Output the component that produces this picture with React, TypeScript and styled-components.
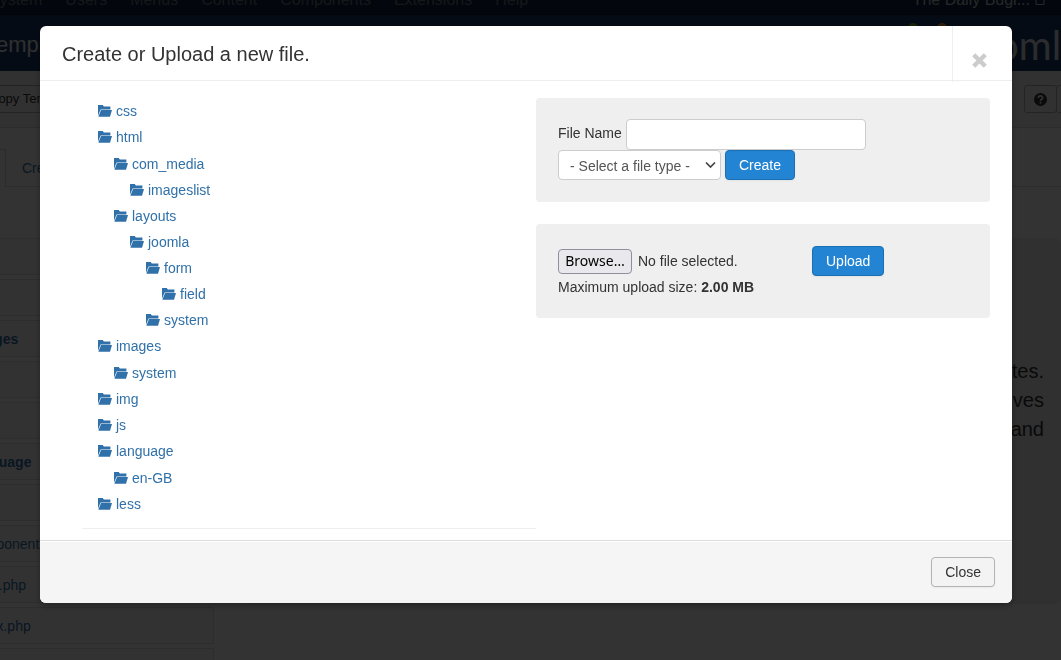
import React from "react";
import styled, { createGlobalStyle } from "styled-components";

const sans = `"Liberation Sans", Arial, Helvetica, sans-serif`;

const GlobalStyle = createGlobalStyle`
  *, *::before, *::after { box-sizing: border-box; }
  body {
    margin: 0;
    overflow: hidden;
    background: #fff;
    color: #333;
    font: 14px/20px ${sans};
  }
  button, input, select { font: inherit; color: inherit; margin: 0; }
  a { color: #3071a9; text-decoration: none; }
  ul { list-style: none; margin: 0; padding: 0; }
`;

/* ---------- page behind the dialog ---------- */

const Viewport = styled.div`
  height: 100vh;
  overflow: hidden;
`;

const Page = styled.div`
  margin-left: -45px;
`;

const NavBar = styled.nav`
  display: flex;
  align-items: flex-end;
  gap: 23px;
  height: 15px;
  padding: 0 16px 5px 34px;
  background: #10223e;
  border-bottom: 1px solid #0b182c;
  font-size: 16px;
  line-height: 18px;
  overflow: hidden;
  white-space: nowrap;
`;

const NavItem = styled.a`
  color: #6d7583;
`;

const SiteLink = styled.a`
  display: flex;
  align-items: center;
  gap: 5px;
  margin-left: auto;
  color: #bfc3c9;
`;

const Header = styled.header`
  display: flex;
  align-items: center;
  height: 56px;
  padding: 4px 0 0 30px;
  background: #1a3867;
  overflow: hidden;
`;

const PageTitle = styled.h1`
  flex: 1;
  margin: 0;
  color: #e8ebf0;
  font-size: 22px;
  font-weight: 400;
  line-height: 30px;
`;

const StatusDots = styled.div`
  display: flex;
  align-self: flex-start;
  gap: 19px;
  padding-top: 4px;
`;

const Dot = styled.span<{ $color: string }>`
  width: 10px;
  height: 10px;
  border-radius: 5px;
  background: ${(p) => p.$color};
`;

const Wordmark = styled.span`
  width: 134px;
  margin: 0 -20px 0 0;
  color: #d5d9e0;
  font: 400 40px/44px Lato, ${sans};
  text-align: right;
`;

const SubHead = styled.div`
  display: flex;
  justify-content: space-between;
  align-items: center;
  height: 57px;
  padding-left: 24px;
  background: #f5f5f5;
  border-bottom: 1px solid #dcdcdc;
`;

const ToolButton = styled.button`
  display: inline-flex;
  align-items: center;
  justify-content: center;
  height: 28px;
  padding: 0 9px;
  border: 1px solid #b3b3b3;
  border-radius: 3px;
  background: #f3f3f3;
  font-size: 13px;
  svg { flex: none; }
`;

const ToolGroup = styled.div`
  display: flex;
  margin-right: -28px;
  ${ToolButton} { width: 33px; }
  ${ToolButton} + ${ToolButton} { margin-left: -1px; }
`;

const Tabs = styled.div`
  display: flex;
  align-items: flex-end;
  height: 59px;
  border-bottom: 1px solid #ddd;
`;

const Tab = styled.a<{ $active?: boolean }>`
  height: 38px;
  padding: 9px 16px;
  margin-bottom: -1px;
  white-space: nowrap;
  ${(p) =>
    p.$active
      ? `width: 50px; padding: 9px 0; color: #555; background: #fff; border: 1px solid #ddd; border-width: 1px 0 1px 1px; border-bottom-color: #fff;`
      : `border: 1px solid #ddd; border-width: 0 0 1px 1px; border-radius: 0 0 0 2px;`}
`;

const Workspace = styled.div`
  display: flex;
  align-items: flex-start;
  gap: 27px;
  padding-top: 51px;
`;

const FileList = styled.ul`
  display: flex;
  flex-direction: column;
  flex: none;
  gap: 4px;
  width: 259px;
`;

const FileItem = styled.li<{ $folder: boolean }>`
  height: 37px;
  padding: 8px 14px;
  border: 1px solid #e0e0e0;
  background: #fafafa;
  font-weight: ${(p) => (p.$folder ? 700 : 400)};
`;

const Hero = styled.section`
  flex: 1;
  height: 366px;
  padding: 119px 17px 0;
  background: #eee;
  border-radius: 6px;
  font-size: 20px;
  line-height: 29px;
  text-align: right;
  p { margin: 0; }
`;

/* ---------- dialog ---------- */

const Backdrop = styled.div`
  position: fixed;
  inset: 0;
  padding: 26px 49px 0 40px;
  background: rgba(0, 0, 0, 0.8);
`;

const Modal = styled.div`
  border-radius: 6px;
  background: #fff;
  box-shadow: 0 3px 7px rgba(0, 0, 0, 0.3);
`;

const ModalHeader = styled.div`
  display: flex;
  justify-content: space-between;
  height: 55px;
  padding-left: 22px;
  border-bottom: 1px solid #eee;
`;

const ModalTitle = styled.h3`
  margin: 0;
  padding-top: 13px;
  font-size: 20px;
  font-weight: 400;
  line-height: 30px;
`;

const CloseIconButton = styled.button`
  width: 60px;
  height: 56px;
  padding: 12px 7px 0 0;
  border: 0;
  border-left: 1px solid #eee;
  background: none;
  color: #ccc;
  svg { display: block; margin: 0 auto; }
`;

const ModalBody = styled.div`
  display: grid;
  grid-template-columns: 1fr 1fr;
  align-items: start;
  padding: 17px 22px 11px 42px;
`;

const TreeColumn = styled.div`
  padding: 0 16px 11px;
  border-bottom: 1px solid #eee;
`;

const TreeList = styled.ul`
  ul { padding-left: 16px; }
  & > li > ul { padding-top: 1px; }
`;

const FolderLink = styled.a`
  display: flex;
  align-items: center;
  gap: 4px;
  line-height: 26px;
`;

const FormColumn = styled.div`
  display: flex;
  flex-direction: column;
  gap: 22px;
`;

const Well = styled.form`
  padding: 21px 22px 22px;
  border-radius: 4px;
  background: #efefef;
`;

const Row = styled.div`
  display: flex;
  align-items: center;
  gap: 4px;
`;

const FieldLabel = styled.label`
  padding-bottom: 4px;
`;

const TextInput = styled.input`
  width: 240px;
  height: 31px;
  padding: 4px 6px;
  border: 1px solid #ccc;
  border-radius: 4px;
  background: #fff;
`;

const SelectWrap = styled.div`
  position: relative;
  width: 163px;
  svg { position: absolute; top: 11px; right: 5px; pointer-events: none; }
`;

const Select = styled.select`
  display: block;
  width: 100%;
  height: 30px;
  padding: 1px 11px 0;
  border: 1px solid #ccc;
  border-radius: 4px;
  background: #fff;
  color: #555;
  appearance: none;
`;

const Button = styled.button<{ $primary?: boolean }>`
  height: 30px;
  padding: 0 13px;
  border: 1px solid ${(p) => (p.$primary ? "#1a6fb5" : "#b3b3b3")};
  border-radius: 4px;
  background: ${(p) => (p.$primary ? "#2384d3" : "#f3f3f3")};
  color: ${(p) => (p.$primary ? "#fff" : "#333")};
  box-shadow: 0 1px 2px rgba(0, 0, 0, 0.05);
`;

const UploadWell = styled(Well)`
  padding: 22px 22px 20px;
`;

const FileField = styled.label`
  position: relative;
  display: flex;
  align-items: center;
  gap: 6px;
  width: 250px;
  input { position: absolute; inset: 0; width: 100%; opacity: 0; }
`;

const Browse = styled.span`
  width: 74px;
  height: 25px;
  border: 1px solid #8f8f9d;
  border-radius: 4px;
  background: #e9e9ed;
  color: #000;
  font: 14px/22px "Noto Sans", sans-serif;
  text-align: center;
`;

const SizeNote = styled.p`
  margin: 0;
  line-height: 22px;
`;

const ModalFooter = styled.div`
  display: flex;
  justify-content: flex-end;
  padding: 16px 17px;
  border-top: 1px solid #ddd;
  border-radius: 0 0 6px 6px;
  background: #f5f5f5;
  box-shadow: inset 0 1px 0 #fff;
`;

/* ---------- icons ---------- */

const FolderIcon = () => (
  <svg width="14" height="12" viewBox="0 0 14 12" fill="currentColor" aria-hidden="true">
    <path d="M0 0h4.8l1 1.4h6.6v3H2.6L.9 8.6 0 11z" />
    <path d="M3 5h11l-2 6.8H.4z" />
  </svg>
);

const CrossIcon = () => (
  <svg width="15" height="15" viewBox="0 0 15 15" stroke="currentColor" strokeWidth="4.4" aria-hidden="true">
    <path d="M1.7 1.7l11.6 11.6M13.3 1.7L1.7 13.3" />
  </svg>
);

const HelpIcon = () => (
  <svg width="13" height="13" viewBox="0 0 13 13" aria-hidden="true">
    <circle cx="6.5" cy="6.5" r="6.5" fill="#333" />
    <path d="M4.3 4.9C4.3 2.2 8.7 2.2 8.7 4.8c0 1.6-2.2 1.4-2.2 3.1" fill="none" stroke="#f3f3f3" strokeWidth="1.7" />
    <path d="M5.6 8.9h1.8v1.7H5.6z" fill="#f3f3f3" />
  </svg>
);

const ChevronIcon = () => (
  <svg width="11" height="8" viewBox="0 0 11 8" fill="none" stroke="#444" strokeWidth="1.7" aria-hidden="true">
    <path d="M1 1.5l4.5 4.6L10 1.5" />
  </svg>
);

const ExternalIcon = () => (
  <svg width="10" height="12" viewBox="0 0 10 12" fill="none" stroke="currentColor" aria-hidden="true">
    <path d="M1 .5h8v10H1z" />
  </svg>
);

/* ---------- data ---------- */

interface Folder {
  name: string;
  children?: Folder[];
}

const folders: Folder[] = [
  { name: "css" },
  {
    name: "html",
    children: [
      { name: "com_media", children: [{ name: "imageslist" }] },
      {
        name: "layouts",
        children: [
          {
            name: "joomla",
            children: [{ name: "form", children: [{ name: "field" }] }, { name: "system" }],
          },
        ],
      },
    ],
  },
  { name: "images", children: [{ name: "system" }] },
  { name: "img" },
  { name: "js" },
  { name: "language", children: [{ name: "en-GB" }] },
  { name: "less" },
];

const menu = ["System", "Users", "Menus", "Content", "Components", "Extensions", "Help"];

const files = [
  "css", "html", "images", "img", "js", "language", "less",
  "component.php", "error.php", "index.php", "offline.php",
];

const FolderItems = ({ items }: { items: Folder[] }) => (
  <>
    {items.map((f) => (
      <li key={f.name}>
        <FolderLink href="#">
          <FolderIcon />
          {f.name}
        </FolderLink>
        {f.children && (
          <ul>
            <FolderItems items={f.children} />
          </ul>
        )}
      </li>
    ))}
  </>
);

export default function App() {
  return (
    <Viewport>
      <GlobalStyle />
      <Page>
        <NavBar>
          {menu.map((m) => (
            <NavItem href="#" key={m}>{m}</NavItem>
          ))}
          <SiteLink href="#">
            The Daily Bugl... <ExternalIcon />
          </SiteLink>
        </NavBar>
        <Header>
          <PageTitle>Templates</PageTitle>
          <StatusDots>
            <Dot $color="#7fae1e" />
            <Dot $color="#e8902a" />
          </StatusDots>
          <Wordmark>Joomla</Wordmark>
        </Header>
        <SubHead>
          <ToolButton type="button">Copy Template</ToolButton>
          <ToolGroup>
            <ToolButton type="button" aria-label="Help"><HelpIcon /></ToolButton>
            <ToolButton type="button" aria-label="Options" />
          </ToolGroup>
        </SubHead>
        <Tabs>
          <Tab href="#" $active>Editor</Tab>
          <Tab href="#">Create Overrides</Tab>
        </Tabs>
        <Workspace>
          <FileList>
            {files.map((f) => (
              <FileItem key={f} $folder={!f.includes(".")}>
                <a href="#">{f}</a>
              </FileItem>
            ))}
          </FileList>
          <Hero>
            <p>templates.</p>
            <p>gives</p>
            <p>and</p>
          </Hero>
        </Workspace>
      </Page>

      <Backdrop>
        <Modal role="dialog" aria-labelledby="dialog-title">
          <ModalHeader>
            <ModalTitle id="dialog-title">Create or Upload a new file.</ModalTitle>
            <CloseIconButton type="button" aria-label="Close dialog">
              <CrossIcon />
            </CloseIconButton>
          </ModalHeader>
          <ModalBody>
            <TreeColumn>
              <TreeList>
                <FolderItems items={folders} />
              </TreeList>
            </TreeColumn>
            <FormColumn>
              <Well>
                <Row>
                  <FieldLabel htmlFor="file-name">File Name</FieldLabel>
                  <TextInput id="file-name" type="text" />
                </Row>
                <Row>
                  <SelectWrap>
                    <Select aria-label="File type">
                      <option>- Select a file type -</option>
                      <option>css</option>
                      <option>php</option>
                      <option>js</option>
                    </Select>
                    <ChevronIcon />
                  </SelectWrap>
                  <Button type="button" $primary>Create</Button>
                </Row>
              </Well>
              <UploadWell>
                <Row>
                  <FileField>
                    <input type="file" />
                    <Browse>Browse…</Browse>
                    No file selected.
                  </FileField>
                  <Button type="button" $primary>Upload</Button>
                </Row>
                <SizeNote>
                  Maximum upload size: <strong>2.00 MB</strong>
                </SizeNote>
              </UploadWell>
            </FormColumn>
          </ModalBody>
          <ModalFooter>
            <Button type="button">Close</Button>
          </ModalFooter>
        </Modal>
      </Backdrop>
    </Viewport>
  );
}
